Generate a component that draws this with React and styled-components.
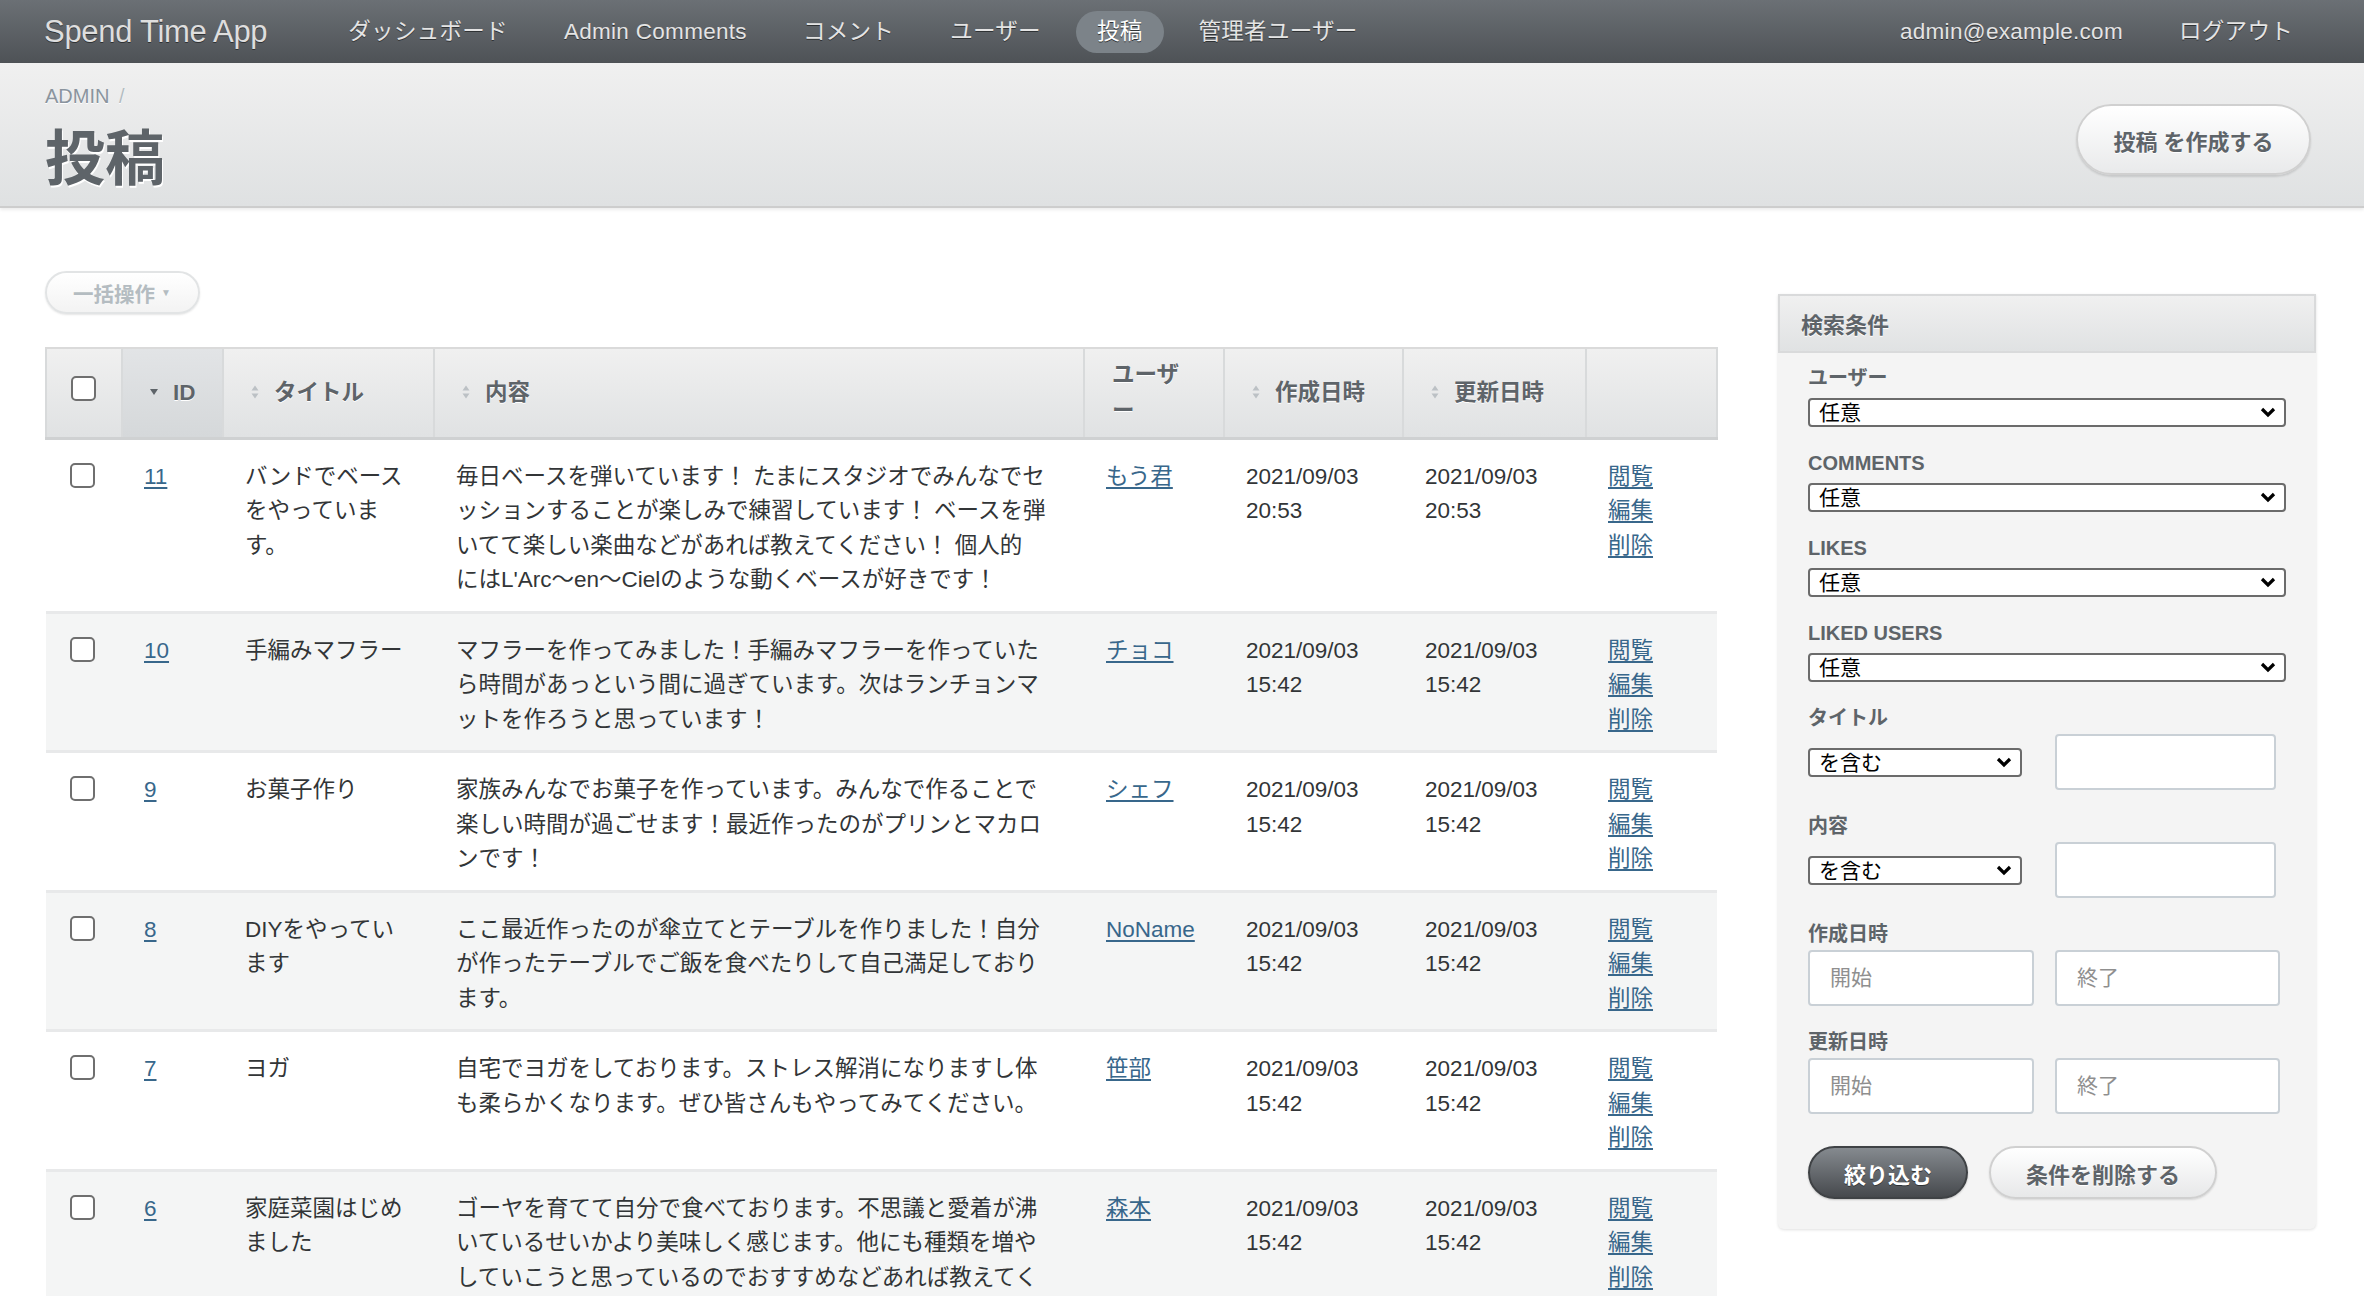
import styled, { createGlobalStyle } from "styled-components"

const GlobalStyle = createGlobalStyle`
  body {
    margin: 0;
    background: #ffffff;
    font-family: "Liberation Sans", "Noto Sans CJK JP", sans-serif;
    color: #323537;
  }
`

const tabs = ["ダッシュボード", "Admin Comments", "コメント", "ユーザー", "投稿", "管理者ユーザー"]

const posts = [
  {
    id: 11,
    title: ["バンドでベース", "をやっていま", "す。"],
    body: [
      "毎日ベースを弾いています！ たまにスタジオでみんなでセ",
      "ッションすることが楽しみで練習しています！ ベースを弾",
      "いてて楽しい楽曲などがあれば教えてください！ 個人的",
      "にはL'Arc〜en〜Cielのような動くベースが好きです！",
    ],
    user: "もう君",
    time: "20:53",
  },
  {
    id: 10,
    title: ["手編みマフラー"],
    body: [
      "マフラーを作ってみました！手編みマフラーを作っていた",
      "ら時間があっという間に過ぎています。次はランチョンマ",
      "ットを作ろうと思っています！",
    ],
    user: "チョコ",
    time: "15:42",
  },
  {
    id: 9,
    title: ["お菓子作り"],
    body: [
      "家族みんなでお菓子を作っています。みんなで作ることで",
      "楽しい時間が過ごせます！最近作ったのがプリンとマカロ",
      "ンです！",
    ],
    user: "シェフ",
    time: "15:42",
  },
  {
    id: 8,
    title: ["DIYをやってい", "ます"],
    body: [
      "ここ最近作ったのが傘立てとテーブルを作りました！自分",
      "が作ったテーブルでご飯を食べたりして自己満足しており",
      "ます。",
    ],
    user: "NoName",
    time: "15:42",
  },
  {
    id: 7,
    title: ["ヨガ"],
    body: [
      "自宅でヨガをしております。ストレス解消になりますし体",
      "も柔らかくなります。ぜひ皆さんもやってみてください。",
    ],
    user: "笹部",
    time: "15:42",
  },
  {
    id: 6,
    title: ["家庭菜園はじめ", "ました"],
    body: [
      "ゴーヤを育てて自分で食べております。不思議と愛着が沸",
      "いているせいかより美味しく感じます。他にも種類を増や",
      "していこうと思っているのでおすすめなどあれば教えてく",
    ],
    user: "森本",
    time: "15:42",
  },
]

const Lines = ({ lines }) =>
  lines.map((l, i) => (
    <span key={i}>
      {l}
      {i < lines.length - 1 && <br />}
    </span>
  ))

const SortIcon = ({ active }) =>
  active ? (
    <svg width="10" height="14" viewBox="0 0 10 14">
      <path d="M1 4 L9 4 L5 10 Z" fill="#5e6469" />
    </svg>
  ) : (
    <svg width="10" height="16" viewBox="0 0 10 16">
      <path d="M1.5 6.5 L8.5 6.5 L5 1.5 Z" fill="#bcc1c5" />
      <path d="M1.5 9.5 L8.5 9.5 L5 14.5 Z" fill="#bcc1c5" />
    </svg>
  )

const Chevron = () => (
  <svg width="16" height="12" viewBox="0 0 16 12">
    <path d="M2 3 L8 9 L14 3" fill="none" stroke="#000" strokeWidth="3.2" />
  </svg>
)

function Select({ value }) {
  return (
    <SelectWrap>
      <NativeSelect defaultValue={value}>
        <option>{value}</option>
      </NativeSelect>
      <ChevronBox>
        <Chevron />
      </ChevronBox>
    </SelectWrap>
  )
}

export default function App() {
  return (
    <>
      <GlobalStyle />
      <Header>
        <SiteTitle>Spend Time App</SiteTitle>
        <Tabs>
          {tabs.map((t) => (
            <Tab key={t} $current={t === "投稿"}>{t}</Tab>
          ))}
        </Tabs>
        <Utility>
          <Tab>admin@example.com</Tab>
          <Tab>ログアウト</Tab>
        </Utility>
      </Header>

      <TitleBar>
        <div>
          <Breadcrumb>
            ADMIN <Sep>/</Sep>
          </Breadcrumb>
          <PageTitle>投稿</PageTitle>
        </div>
        <PillButton>投稿 を作成する</PillButton>
      </TitleBar>

      <Main>
        <Content>
          <BatchButton>
            一括操作 <small>▼</small>
          </BatchButton>
          <Table>
            <colgroup>
              <col style={{ width: 76 }} />
              <col style={{ width: 101 }} />
              <col style={{ width: 211 }} />
              <col style={{ width: 650 }} />
              <col style={{ width: 140 }} />
              <col style={{ width: 179 }} />
              <col style={{ width: 183 }} />
              <col style={{ width: 131 }} />
            </colgroup>
            <thead>
              <tr>
                <Th $check>
                  <Check type="checkbox" />
                </Th>
                <Th $sorted>
                  <SortIcon active />
                  <span>ID</span>
                </Th>
                <Th>
                  <SortIcon />
                  <span>タイトル</span>
                </Th>
                <Th>
                  <SortIcon />
                  <span>内容</span>
                </Th>
                <Th $plain>
                  ユーザ
                  <br />ー
                </Th>
                <Th>
                  <SortIcon />
                  <span>作成日時</span>
                </Th>
                <Th>
                  <SortIcon />
                  <span>更新日時</span>
                </Th>
                <Th />
              </tr>
            </thead>
            <tbody>
              {posts.map((p, i) => (
                <Row key={p.id} $odd={i % 2 === 1}>
                  <Td $check>
                    <Check type="checkbox" />
                  </Td>
                  <Td>
                    <Link>{p.id}</Link>
                  </Td>
                  <Td>
                    <Lines lines={p.title} />
                  </Td>
                  <Td>
                    <Lines lines={p.body} />
                  </Td>
                  <Td>
                    <Link>{p.user}</Link>
                  </Td>
                  <Td>
                    2021/09/03
                    <br />
                    {p.time}
                  </Td>
                  <Td>
                    2021/09/03
                    <br />
                    {p.time}
                  </Td>
                  <Td>
                    <Actions>
                      <Link>閲覧</Link>
                      <Link>編集</Link>
                      <Link>削除</Link>
                    </Actions>
                  </Td>
                </Row>
              ))}
            </tbody>
          </Table>
        </Content>

        <Sidebar>
          <PanelHeader>検索条件</PanelHeader>
          <PanelBody>
            {["ユーザー", "COMMENTS", "LIKES", "LIKED USERS"].map((l) => (
              <Group key={l}>
                <Label>{l}</Label>
                <Select value="任意" />
              </Group>
            ))}
            {["タイトル", "内容"].map((l) => (
              <Group key={l}>
                <Label $tight>{l}</Label>
                <PairRow $split="214px 221px" $gap="33px">
                  <Select value="を含む" />
                  <TextInput />
                </PairRow>
              </Group>
            ))}
            {["作成日時", "更新日時"].map((l) => (
              <Group key={l}>
                <Label $tight>{l}</Label>
                <PairRow $split="226px 225px" $gap="21px">
                  <TextInput placeholder="開始" />
                  <TextInput placeholder="終了" />
                </PairRow>
              </Group>
            ))}
            <ButtonRow>
              <DarkButton>絞り込む</DarkButton>
              <LightButton>条件を削除する</LightButton>
            </ButtonRow>
          </PanelBody>
        </Sidebar>
      </Main>
    </>
  )
}

const Header = styled.header`
  display: flex;
  align-items: center;
  height: 63px;
  padding: 0 50px 0 44px;
  background: linear-gradient(180deg, #6b7075 0%, #4e5256 100%);
  box-sizing: border-box;
`

const SiteTitle = styled.h1`
  margin: 0 60px 0 0;
  font-size: 31px;
  font-weight: 400;
  color: #dedede;
  text-shadow: 0 1px 0 #2f3234;
  letter-spacing: -0.3px;
  white-space: nowrap;
`

const Tabs = styled.nav`
  display: flex;
  align-items: center;
  gap: 14px;
  flex: 1;
`

const Utility = styled.nav`
  display: flex;
  align-items: center;
  gap: 14px;
`

const Tab = styled.a`
  display: block;
  padding: 0 21px;
  height: 42px;
  line-height: 42px;
  border-radius: 21px;
  font-size: 22.5px;
  letter-spacing: 0.3px;
  color: ${(p) => (p.$current ? "#ffffff" : "#e4e4e4")};
  background: ${(p) => (p.$current ? "#7c8389" : "transparent")};
  text-shadow: 0 1px 0 #2f3234;
  white-space: nowrap;
`

const TitleBar = styled.div`
  display: flex;
  justify-content: space-between;
  align-items: flex-start;
  height: 145px;
  padding: 23px 53px 0 45px;
  box-sizing: border-box;
  background: linear-gradient(180deg, #f0f0f0 0%, #dfe1e2 100%);
  border-bottom: 2px solid #cdcdcd;
  box-shadow: 0 2px 3px rgba(0, 0, 0, 0.08);
`

const Breadcrumb = styled.div`
  font-size: 20px;
  line-height: 20px;
  color: #8a949e;
  text-shadow: 0 1px 0 #fff;
`

const Sep = styled.span`
  color: #b3bcc1;
  margin-left: 4px;
`

const PageTitle = styled.h2`
  margin: 19px 0 0;
  font-size: 60px;
  line-height: 70px;
  font-weight: 700;
  color: #5e6469;
  text-shadow: 1px 2px 0 #ffffff;
`

const PillButton = styled.button`
  margin-top: 18px;
  width: 235px;
  height: 71px;
  border-radius: 36px;
  border: 2px solid #d0d0d0;
  background: linear-gradient(180deg, #ffffff 0%, #e9eaeb 100%);
  box-shadow: 0 2px 2px rgba(0, 0, 0, 0.12);
  font-family: inherit;
  font-size: 22px;
  font-weight: 700;
  color: #5e6469;
  text-shadow: 0 1px 0 #fff;
`

const Main = styled.div`
  display: flex;
  align-items: flex-start;
  gap: 60px;
  padding: 0 48px 0 45px;
`

const Content = styled.div`
  flex: 1;
  padding-top: 63px;
`

const BatchButton = styled.button`
  display: flex;
  align-items: center;
  gap: 6px;
  width: 155px;
  height: 43px;
  padding: 0 0 0 26px;
  border-radius: 22px;
  border: 2px solid #e2e4e5;
  background: linear-gradient(180deg, #ffffff 0%, #f3f3f3 100%);
  box-shadow: 0 1px 2px rgba(0, 0, 0, 0.1);
  font-family: inherit;
  font-size: 20.5px;
  font-weight: 700;
  color: #b4bcc1;
  small {
    font-size: 10px;
  }
`

const Table = styled.table`
  margin-top: 33px;
  width: 100%;
  table-layout: fixed;
  border-collapse: collapse;
  font-size: 22.5px;
  line-height: 34.5px;
`

const Th = styled.th`
  height: 90px;
  padding: 0 10px 0 ${(p) => (p.$check ? "24px" : p.$plain ? "27px" : "26px")};
  box-sizing: border-box;
  text-align: left;
  font-weight: 700;
  color: #5e6469;
  text-shadow: 0 1px 0 #fff;
  line-height: 36px;
  background: ${(p) =>
    p.$sorted
      ? "linear-gradient(180deg, #e2e4e6 0%, #d5d8da 100%)"
      : "linear-gradient(180deg, #f0f0f0 0%, #e0e2e3 100%)"};
  border-top: 2px solid #dadada;
  border-bottom: 3px solid #cfd1d2;
  border-left: 2px solid #d8dadb;
  &:last-child {
    border-right: 2px solid #d8dadb;
  }
  svg {
    margin-right: 14px;
    vertical-align: middle;
    position: relative;
    top: -2px;
  }
  input {
    margin: 0;
    position: relative;
    top: -4px;
  }
`

const Row = styled.tr`
  background: ${(p) => (p.$odd ? "#f4f5f5" : "#ffffff")};
  border-bottom: 3px solid #e8e9ea;
`

const Td = styled.td`
  vertical-align: top;
  padding: 20px 12px 13px ${(p) => (p.$check ? "24px" : "22px")};
  text-align: left;
  color: #323537;
`

const Check = styled.input`
  appearance: none;
  display: block;
  width: 25px;
  height: 25px;
  margin: 3px 0 0 0;
  border: 2px solid #6f6f6f;
  border-radius: 5px;
  background: #fff;
`

const Link = styled.a`
  color: #38678b;
  text-decoration: underline;
  text-underline-offset: 3px;
`

const Actions = styled.div`
  display: flex;
  flex-direction: column;
  align-items: flex-start;
`

const Sidebar = styled.aside`
  width: 540px;
  margin-top: 86px;
  background: #f4f4f4;
  border-radius: 0 0 6px 6px;
  box-shadow: 0 1px 3px rgba(0, 0, 0, 0.12);
`

const PanelHeader = styled.h3`
  margin: 0;
  height: 59px;
  line-height: 59px;
  padding-left: 21px;
  font-size: 22px;
  font-weight: 700;
  color: #5e6469;
  text-shadow: 0 1px 0 #fff;
  background: linear-gradient(180deg, #f0f0f0 0%, #e0e2e3 100%);
  border: 2px solid #d9dadb;
  box-sizing: border-box;
`

const PanelBody = styled.div`
  padding: 13px 30px 30px;
`

const Group = styled.div`
  margin-bottom: 24px;
`

const Label = styled.label`
  display: block;
  height: 24px;
  font-size: 20px;
  line-height: 24px;
  font-weight: 700;
  color: #5e6469;
  margin-bottom: ${(p) => (p.$tight ? "4px" : "8px")};
`

const SelectWrap = styled.div`
  position: relative;
  width: 100%;
  height: 29px;
`

const NativeSelect = styled.select`
  appearance: none;
  display: block;
  width: 100%;
  height: 29px;
  padding: 0 30px 0 9px;
  border: 2px solid #6b6b6b;
  border-radius: 4px;
  background: #fff;
  font-family: inherit;
  font-size: 21px;
  line-height: 25px;
  color: #000;
`

const ChevronBox = styled.span`
  position: absolute;
  right: 10px;
  top: 8px;
  display: flex;
  pointer-events: none;
`

const PairRow = styled.div`
  display: grid;
  grid-template-columns: ${(p) => p.$split};
  column-gap: ${(p) => p.$gap};
  align-items: center;
  height: 56px;
`

const TextInput = styled.input`
  display: block;
  box-sizing: border-box;
  width: 100%;
  height: 56px;
  padding: 0 20px;
  border: 2px solid #c9d0d6;
  border-radius: 4px;
  background: #fff;
  font-family: inherit;
  font-size: 21px;
  &::placeholder {
    color: #8f8f8f;
  }
`

const ButtonRow = styled.div`
  display: flex;
  gap: 21px;
  margin-top: 32px;
`

const DarkButton = styled.button`
  width: 160px;
  height: 53px;
  border-radius: 27px;
  border: 2px solid #3f4245;
  background: linear-gradient(180deg, #858a8f 0%, #46494d 100%);
  font-family: inherit;
  font-size: 22px;
  font-weight: 700;
  color: #fff;
  text-shadow: 0 1px 0 #2e3134;
  box-shadow: 0 1px 2px rgba(0, 0, 0, 0.2);
`

const LightButton = styled.button`
  width: 228px;
  height: 53px;
  border-radius: 27px;
  border: 2px solid #d0d0d0;
  background: linear-gradient(180deg, #ffffff 0%, #e7e8e9 100%);
  font-family: inherit;
  font-size: 22px;
  font-weight: 700;
  color: #5e6469;
  text-shadow: 0 1px 0 #fff;
  box-shadow: 0 1px 2px rgba(0, 0, 0, 0.12);
`
